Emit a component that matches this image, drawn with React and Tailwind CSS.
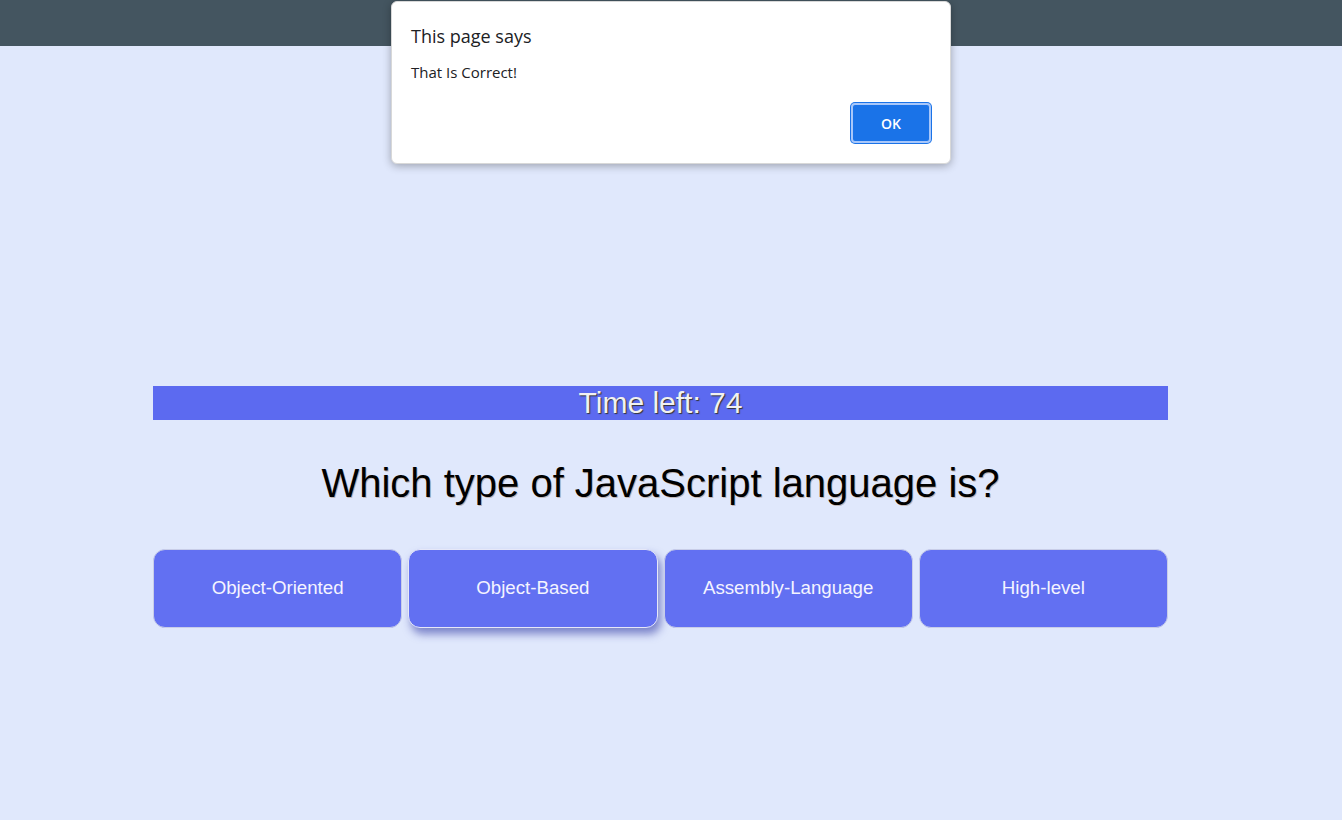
export default function App() {
  const answers = ['Object-Oriented', 'Object-Based', 'Assembly-Language', 'High-level'];

  return (
    <div className="relative min-h-screen h-[820px] bg-[#e0e8fc] font-['Liberation_Sans',Arial,sans-serif] overflow-hidden">
      {/* top bar */}
      <div className="h-[46px] bg-[#445560]" />

      <div className="ml-[153px] w-[1015px] mt-[340px]">
        <div className="h-[34px] bg-[#5c6af0] flex items-center justify-center text-[30px] leading-none text-[#f1f1f1] [text-shadow:1px_1px_1px_#333]">
          Time left: 74
        </div>

        <h1 className="mt-[39px] text-center text-[40px] leading-[48px] text-black [text-shadow:1px_1px_0_rgba(120,60,0,0.3)]">
          Which type of JavaScript language is?
        </h1>

        <div className="mt-[42px] grid grid-cols-4 gap-[6px]">
          {answers.map((a, i) => (
            <button
              key={a}
              className={
                'h-[79px] rounded-[12px] border border-[#c8cde8] bg-[#6270f2] text-[18.7px] text-[#f4f4ff] ' +
                (i === 1 ? 'shadow-[3px_6px_8px_rgba(40,50,160,0.55)] border-[#e6e8f8]' : '')
              }
            >
              {a}
            </button>
          ))}
        </div>
      </div>

      {/* alert dialog */}
      <div className="absolute left-[391px] top-[1px] w-[560px] h-[163px] bg-white rounded-[6px] shadow-[0_2px_8px_rgba(0,0,0,0.3)] border border-[#d8d8d8] font-['Open_Sans','Noto_Sans',sans-serif] text-[#202124]">
        <div className="pl-[19px] pt-[22px] text-[18px] leading-6">This page says</div>
        <div className="pl-[19px] mt-[14px] text-[15px] leading-5">That Is Correct!</div>
        <div className="flex justify-end pr-[19px] mt-[21px]">
          <button className="w-[80px] h-[40px] rounded-[4px] bg-[#1a73e8] text-white text-[14px] font-semibold border-2 border-[#a8c7fa] ring-1 ring-[#1a73e8]">
            OK
          </button>
        </div>
      </div>
    </div>
  );
}
